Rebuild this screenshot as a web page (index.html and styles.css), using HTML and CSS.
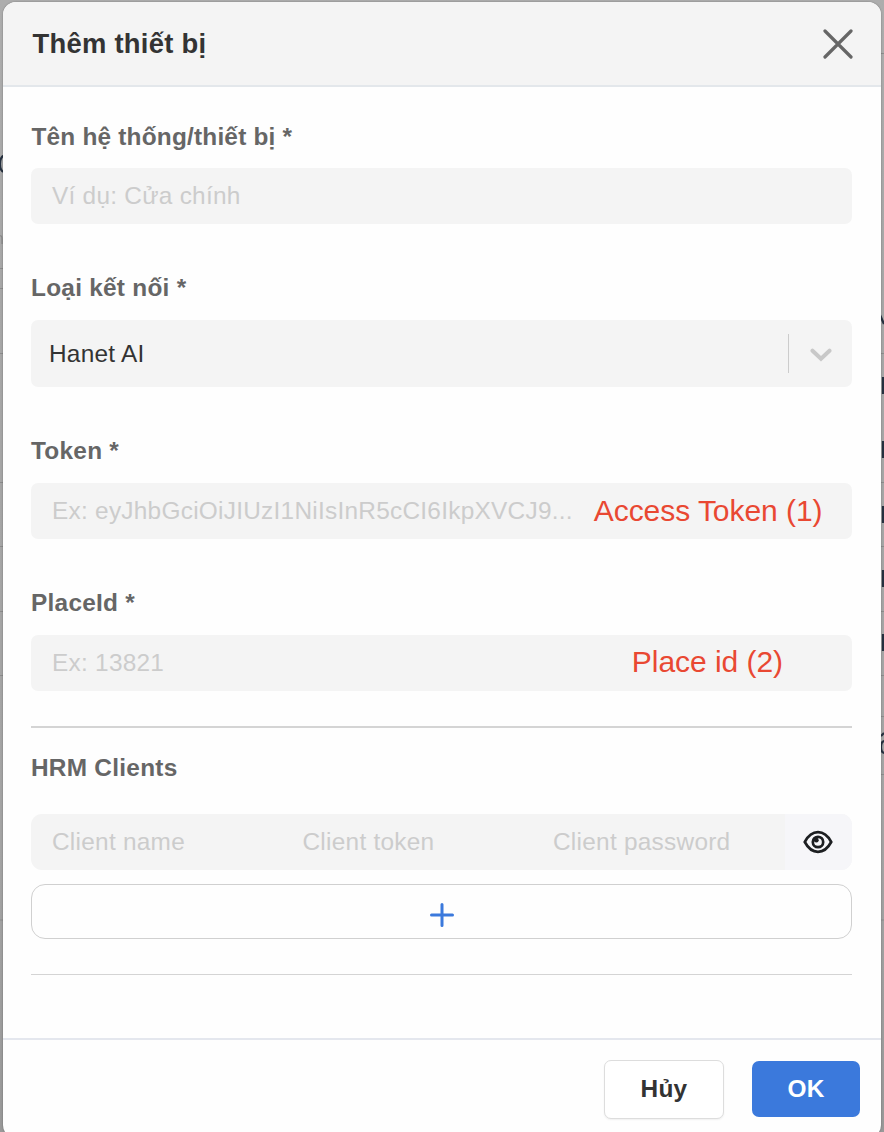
FILE: index.html
```html
<!DOCTYPE html>
<html lang="vi">
<head>
<meta charset="utf-8">
<title>Thêm thiết bị</title>
<link rel="stylesheet" href="styles.css">
</head>
<body>
<svg class="backdrop" viewBox="0 0 884 1132" aria-hidden="true">
  <g class="rules">
    <path d="M0 268.5H4M0 288.5H4M0 353.5H4M0 482.5H4M0 546.5H4M0 611.5H4M0 675.5H4M0 920H4"/>
    <path d="M880 53.5H884M880 353.5H884M880 482.5H884M880 546.5H884M880 611.5H884M880 675.5H884M880 716.5H884M880 774.5H884M880 920H884"/>
  </g>
  <g class="marks">
    <path d="M4 155.500Q0 157 0 164T4 172M880 315L884 324M883 377V394M883 441V458M883 506V523M883 570V587M883 634V651M885 741Q881 741 881 747Q881 753 885 753M881 736L884 733"/>
    <path class="faint" d="M0 236Q2 235 2 239V244"/>
  </g>
</svg>
<main class="modal">
  <header class="modal-header">
    <h1 class="title">Thêm thiết bị</h1>
    <svg class="close" viewBox="0 0 30 30"><path d="M2 2L28 28M28 2L2 28"/></svg>
  </header>
  <section class="modal-body">
    <div class="field">
      <div class="label label-name">Tên hệ thống/thiết bị *</div>
      <div class="input"><span class="hint">Ví dụ: Cửa chính</span></div>
    </div>
    <div class="field">
      <div class="label">Loại kết nối *</div>
      <div class="input select">
        <span class="value">Hanet AI</span>
        <span class="divider"></span>
        <svg class="chevron" viewBox="0 0 22 16"><path d="M2.5 4.7L11 12.7L19.5 4.7"/></svg>
      </div>
    </div>
    <div class="field">
      <div class="label">Token *</div>
      <div class="input"><span class="hint">Ex: eyJhbGciOiJIUzI1NiIsInR5cCI6IkpXVCJ9...</span><span class="note note-token">Access Token (1)</span></div>
    </div>
    <div class="field field-place">
      <div class="label">PlaceId *</div>
      <div class="input"><span class="hint">Ex: 13821</span><span class="note note-place">Place id (2)</span></div>
    </div>
    <div class="clients">
      <div class="label label-clients">HRM Clients</div>
      <div class="client-row">
        <span class="cell">Client name</span>
        <span class="cell">Client token</span>
        <span class="cell">Client password</span>
        <span class="reveal">
          <svg class="eye" viewBox="0 0 30 24"><path d="M1.8 12Q7 2.200 15 2.200T28.200 12Q23 21.800 15 21.800T1.800 12Z"/><circle cx="15" cy="12" r="5.200"/><circle class="glint" cx="13.300" cy="10.200" r="2.400"/></svg>
        </span>
      </div>
      <div class="add"><svg class="plus" viewBox="0 0 24 24"><path d="M12 1.500V22.500M1.500 12H22.500"/></svg></div>
    </div>
  </section>
  <footer class="modal-footer">
    <button class="button cancel">Hủy</button>
    <button class="button ok">OK</button>
  </footer>
</main>
</body>
</html>
```
FILE: styles.css
```css
* { box-sizing: border-box; }
html, body { height: 1132px; overflow: hidden; }
body {
  margin: 0;
  padding: 2px 3.5px 0 3px;
  background: linear-gradient(#adadad, #a7a7a7 25%, #a4a4a4 75%, #999 100%);
  font-family: "Liberation Sans", Arial, sans-serif;
  font-size: 24.4px;
  letter-spacing: .26px;
}
.backdrop { position: absolute; left: 0; top: 0; width: 884px; height: 1132px; }
.rules path { stroke: #8c8c8c; stroke-width: 1; }
.marks path { fill: none; stroke: #25303f; stroke-width: 2.2; }
.marks .faint { stroke: #888; stroke-width: 1.2; }
.modal {
  position: relative;
  display: flex;
  flex-direction: column;
  height: 1136px;
  background: #fefefe;
  border-radius: 13px;
  box-shadow: 0 0 2px rgba(0, 0, 0, .35);
  overflow: hidden;
}
.modal-header {
  display: flex;
  align-items: center;
  justify-content: space-between;
  height: 85px;
  padding: 0 27.5px 0 29.5px;
  background: #f4f4f4;
  border-bottom: 2px solid #e3e7eb;
}
.title { margin: 0; color: #333; font-size: 27.4px; line-height: 32px; }
.close { width: 30px; height: 30px; fill: none; stroke: #666; stroke-width: 3.2; stroke-linecap: round; }
.modal-body { height: 951px; padding: 33px 28.5px 0 28px; }
.field { margin-bottom: 48px; }
.label {
  height: 48px;
  color: #666;
  font-weight: bold;
  line-height: 32px;
}
.label-name { line-height: 34px; padding-left: .5px; letter-spacing: .2px; }
.input {
  display: flex;
  align-items: center;
  height: 56px;
  padding-left: 21px;
  background: #f4f4f4;
  border-radius: 7px;
  white-space: nowrap;
}
.hint { color: #ccc; }
.select { height: 67px; padding: 0 20px 0 18px; }
.value { flex: 1; color: #333; }
.divider { width: 1px; height: 39px; margin-right: 21px; background: #ccc; }
.chevron { width: 22px; height: 16px; fill: none; stroke: #c8c8c8; stroke-width: 4; stroke-linecap: round; }
.note { margin-left: auto; color: #e94832; font-size: 30px; letter-spacing: -.05px; }
.note-token { margin-right: 29.5px; }
.note-place { margin-right: 69px; padding-bottom: 2px; }
.field-place { margin-bottom: 35px; }
.clients { height: 249px; border-top: 2px solid #d4d4d4; border-bottom: 1px solid #d4d4d4; padding-top: 24px; }
.label-clients { height: 62px; }
.client-row {
  display: grid;
  grid-template-columns: 250.5px 250.5px 1fr 67px;
  align-items: center;
  height: 56px;
  background: #f4f4f4;
  border-radius: 11px;
  overflow: hidden;
}
.cell { padding-left: 21px; color: #ccc; white-space: nowrap; }
.reveal { display: flex; align-items: center; height: 100%; padding-left: 17.5px; background: #f6f6f9; }
.eye { width: 30px; height: 24px; fill: none; stroke: #1d1f22; stroke-width: 2.7; }
.eye .glint { fill: #1d1f22; stroke: none; }
.add {
  display: flex;
  align-items: center;
  justify-content: center;
  height: 55px;
  margin-top: 14px;
  padding-top: 6px;
  border: 1px solid #d0d0d0;
  border-radius: 14px;
}
.plus { width: 24px; height: 24px; fill: none; stroke: #3b79dc; stroke-width: 3; stroke-linecap: round; }
.modal-footer {
  display: flex;
  align-items: flex-start;
  justify-content: flex-end;
  gap: 28px;
  height: 100px;
  padding: 20px 20.5px 0 0;
  border-top: 2px solid #e4e7ee;
}
.button { padding: 0; font: bold 24.4px/1 "Liberation Sans", Arial, sans-serif; letter-spacing: .26px; border-radius: 7px; }
.cancel { width: 120px; height: 59px; padding-bottom: 1px; background: #fff; color: #333; border: 1.5px solid #ddd; box-shadow: 0 1px 2px rgba(0, 0, 0, .06); }
.ok { width: 108px; height: 56px; margin-top: 1px; background: #3b79dc; color: #fff; border: 0; }
```
